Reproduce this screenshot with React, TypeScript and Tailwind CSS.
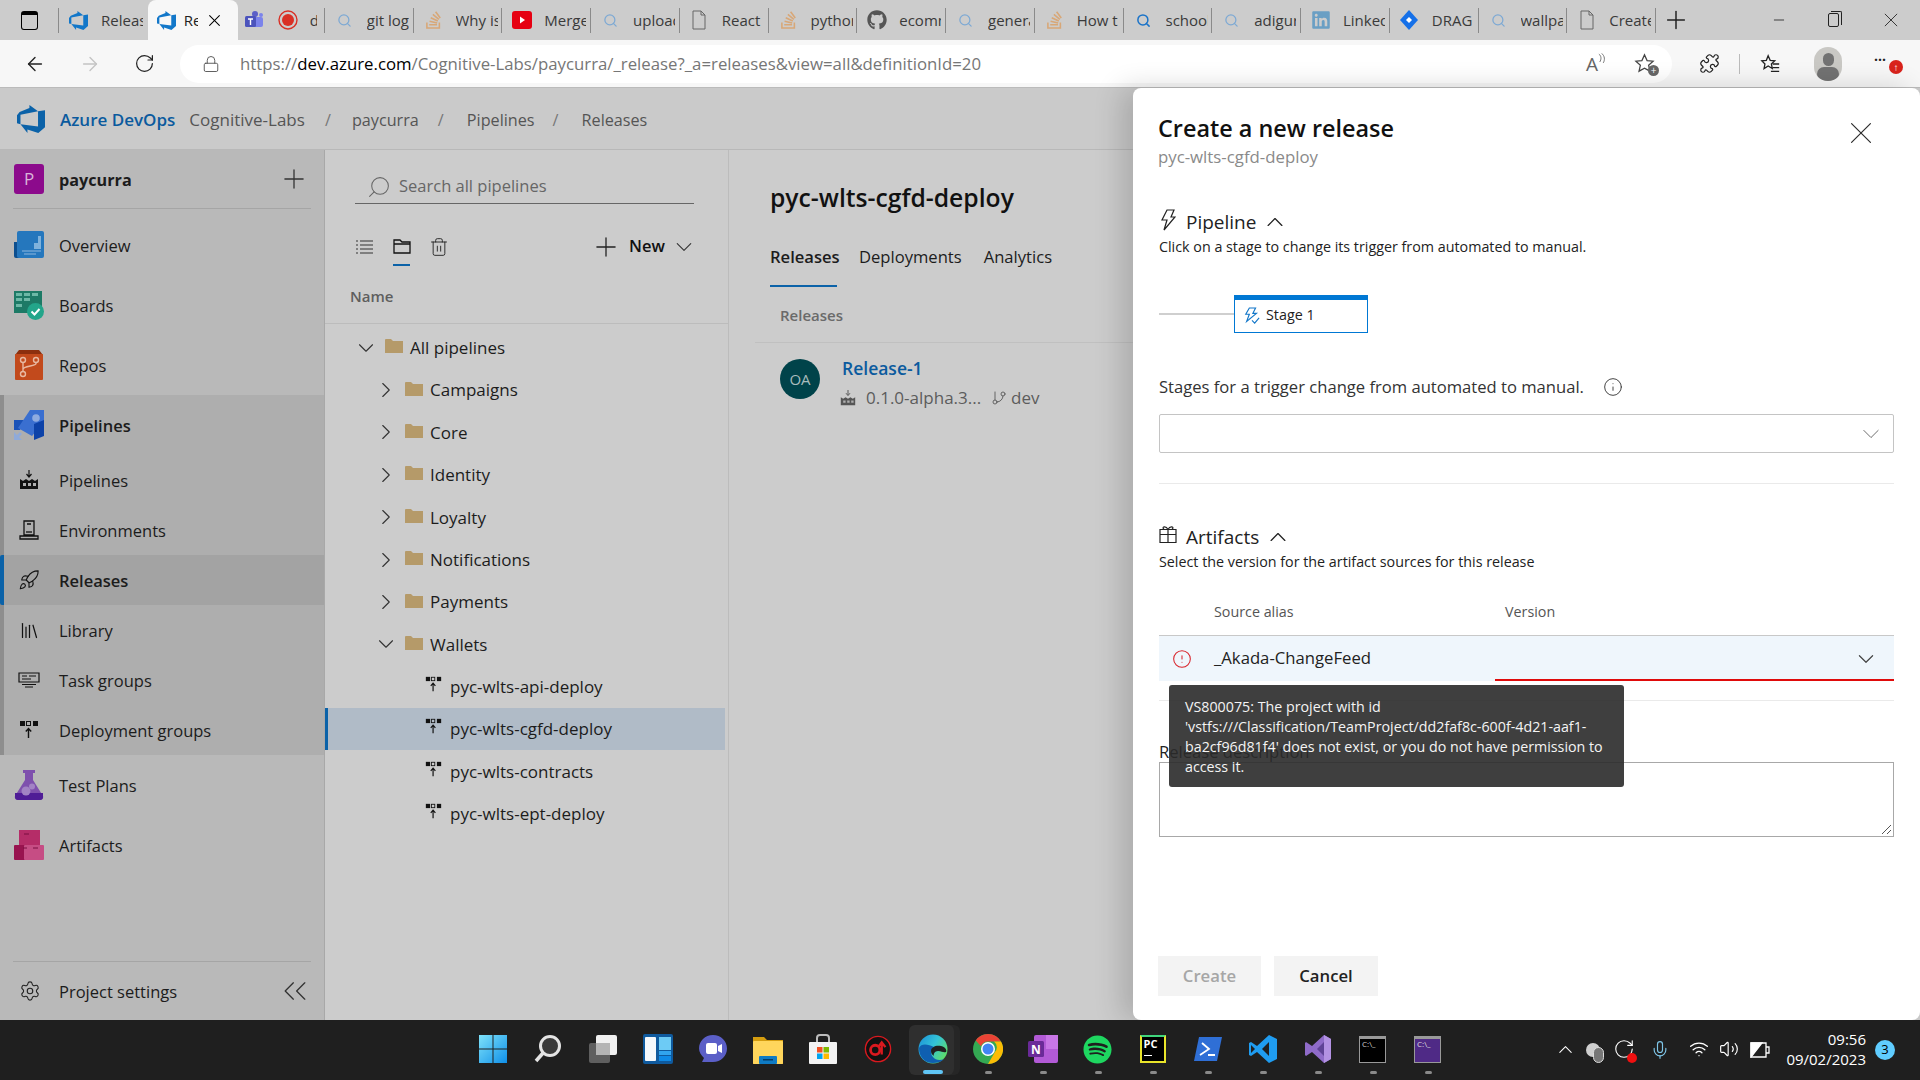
import type { ReactNode } from "react";
import {
  AlertCircle,
  ArrowLeft,
  ArrowRight,
  ChevronDown,
  ChevronRight,
  ChevronUp,
  ChevronsLeft,
  GitBranch,
  Info,
  Library,
  Lock,
  Mic,
  Minus,
  Plus,
  Puzzle,
  RotateCw,
  Rocket,
  Search,
  Settings,
  Trash2,
  Volume2,
  Wifi,
  X,
} from "lucide-react";
import { FaGithub, FaLinkedin, FaSpotify, FaStackOverflow } from "react-icons/fa";

const font = "font-['Open_Sans','Noto_Sans',sans-serif]";

function AzureLogo({ className = "w-[18px] h-[18px]", color = "#1277c9" }: { className?: string; color?: string }) {
  return (
    <svg viewBox="0 0 24 24" className={className} fill={color}>
      <path d="M0 8.877L2.247 5.91l8.405-3.416V.022l7.37 5.393L2.966 8.338v8.225L0 15.707zm24-4.45v14.651l-5.753 4.9-9.303-3.057v3.056l-5.978-7.416 15.057 1.798V5.415z" />
    </svg>
  );
}

function DocIcon() {
  return (
    <svg viewBox="0 0 16 20" className="w-4 h-5" fill="none" stroke="#666" strokeWidth="1">
      <path d="M2 1h8l4 4v14H2z" />
      <path d="M10 1v4h4" />
    </svg>
  );
}

function TeamsIcon() {
  return (
    <svg viewBox="0 0 20 20" className="w-[20px] h-[20px]">
      <circle cx="11" cy="4" r="3" fill="#5b5fc7" />
      <circle cx="17" cy="5" r="2" fill="#7b83eb" />
      <rect x="8" y="7" width="11" height="10" rx="2" fill="#7b83eb" />
      <rect x="1" y="6" width="11" height="11" rx="1.5" fill="#4b53bc" />
      <path d="M4 9h5M6.5 9v6" stroke="#fff" strokeWidth="1.4" />
    </svg>
  );
}

function RecordIcon() {
  return (
    <svg viewBox="0 0 20 20" className="w-[20px] h-[20px]">
      <circle cx="10" cy="10" r="9" fill="none" stroke="#d93025" strokeWidth="1.4" />
      <circle cx="10" cy="10" r="6" fill="#d93025" />
    </svg>
  );
}

function YoutubeIcon() {
  return (
    <svg viewBox="0 0 20 20" className="w-[20px] h-[20px]">
      <rect width="20" height="18" rx="3" fill="#e60012" y="1" />
      <path d="M8 6.500l5 3.500-5 3.500z" fill="#fff" />
    </svg>
  );
}

function JiraIcon() {
  return (
    <svg viewBox="0 0 20 20" className="w-[20px] h-[24px]">
      <path d="M10 0l9 10-9 10-9-10z" fill="#1570e8" />
      <path d="M10 7l3 3-3 3-3-3z" fill="#fff" />
    </svg>
  );
}

function Bolt({ className, color = "#222" }: { className: string; color?: string }) {
  return (
    <svg viewBox="0 0 16 22" className={className} fill="none" stroke={color} strokeWidth="1.2">
      <path d="M7 1h7l-3 7h4L4 21l3-10H2z" />
    </svg>
  );
}

function BoltCheck() {
  return (
    <svg viewBox="0 0 18 20" className="w-[16px] h-[18px] ml-[9px]" fill="none" stroke="#1277c9" strokeWidth="1.3">
      <path d="M6 1h7l-3 6h4L3 16l3-8H2z" />
      <path d="M9 15l3 3 5-6" />
    </svg>
  );
}

function GiftIcon() {
  return (
    <svg viewBox="0 0 18 18" className="w-[18px] h-[19px] -mt-[5px]" fill="none" stroke="#222" strokeWidth="1.2">
      <path d="M1 4h16v13H1zM1 9h16M9 4v13M5 4c-3-3 2-4 4 0 2-4 7-3 4 0" />
    </svg>
  );
}

type TabDef = { icon: ReactNode; text: string; active?: boolean };

const sq = <Search className="w-[15px] h-[15px] text-[#7da9d4]" strokeWidth={2} />;
const so = <FaStackOverflow className="w-[17px] h-[20px] text-[#d8a777]" />;
const az = <AzureLogo className="w-[19px] h-[19px]" />;

const tabs: TabDef[] = [
  { icon: az, text: "Releas" },
  { icon: az, text: "Re", active: true },
  { icon: <span className="flex items-center gap-[14px]"><TeamsIcon /><RecordIcon /></span>, text: "d" },
  { icon: sq, text: "git log" },
  { icon: so, text: "Why is" },
  { icon: <YoutubeIcon />, text: "Merge" },
  { icon: sq, text: "upload" },
  { icon: <DocIcon />, text: "React" },
  { icon: so, text: "python" },
  { icon: <FaGithub className="w-[20px] h-[20px] text-[#555]" />, text: "ecomm" },
  { icon: sq, text: "genera" },
  { icon: so, text: "How t" },
  { icon: <Search className="w-[15px] h-[15px] text-[#1a73c8]" strokeWidth={2.4} />, text: "school" },
  { icon: sq, text: "adigur" },
  { icon: <FaLinkedin className="w-[20px] h-[20px] text-[#6a9fc4]" />, text: "Linked" },
  { icon: <JiraIcon />, text: "DRAG" },
  { icon: sq, text: "wallpa" },
  { icon: <DocIcon />, text: "Create" },
];

function BrowserChrome() {
  return (
    <>
      <div className="h-10 bg-[#cccccc] flex items-center text-[15px] text-[#3a3a3a] shrink-0">
        <div className="w-[59px] h-[25px] flex items-center justify-center border-r border-[#8a8a8a]">
          <div className="w-[17px] h-[19px] rounded-[3px] border-[1.5px] border-black border-t-[4px]" />
        </div>
        {tabs.map((t, i) =>
          t.active ? (
            <div key={i} className="w-[90px] h-10 bg-[#f7f7f7] rounded-t-lg flex items-center relative pl-[9px] text-[#222]">
              {t.icon}
              <span className="ml-[8px] w-[14px] overflow-hidden">{t.text}</span>
              <X className="w-[15px] h-[15px] ml-[9px] text-black scale-[1.3]" strokeWidth={1.3} />
            </div>
          ) : i === 2 ? (
            <div key={i} className="w-[87px] h-[25px] flex items-center pl-[6px] border-r border-[#8a8a8a]">
              {t.icon}
              <span className="ml-[12px] w-[7px] overflow-hidden">{t.text}</span>
            </div>
          ) : (
            <div key={i} className={`w-[88.75px] h-[25px] flex items-center pl-[9px] border-r border-[#8a8a8a] ${i === 0 ? "border-r-0" : ""}`}>
              <span className="w-[21px] flex justify-center shrink-0 mr-[12px]">{t.icon}</span>
              <span className="overflow-hidden whitespace-nowrap w-[42px]">{t.text}</span>
            </div>
          ),
        )}
        <Plus className="w-[24px] h-[24px] ml-[8px] text-[#222] scale-[1.2]" strokeWidth={1.25} />
        <div className="flex-1" />
        <Minus className="w-[16px] h-[16px] mr-[41px] text-[#222]" strokeWidth={1.25} />
        <div className="relative w-[11px] h-[14px] border border-[#222] rounded-[2px] mr-[43px]">
          <span className="absolute -top-[3px] left-[2px] w-[11px] h-[14px] border-t border-r border-[#222] rounded-tr-[2px]" />
        </div>
        <X className="w-[18px] h-[18px] mr-[20px] text-[#222] scale-[1.3]" strokeWidth={0.9} />
      </div>
      <div className="h-12 bg-[#f7f7f7] border-b border-[#bbb] flex items-center shrink-0 text-[#222]">
        <ArrowLeft className="w-[22px] h-[22px] ml-[24px]" strokeWidth={1.5} />
        <ArrowRight className="w-[22px] h-[22px] ml-[33px] text-[#c4c4c4]" strokeWidth={1.5} />
        <RotateCw className="w-[21px] h-[21px] ml-[33px]" strokeWidth={1.4} />
        <div className="w-[1492px] h-[38px] ml-[25px] bg-white rounded-full flex items-center">
          <Lock className="w-[18px] h-[18px] ml-[22px] text-[#555]" strokeWidth={1.25} />
          <span className="ml-[20px] text-[16.8px] text-[#767676] whitespace-nowrap">
            https://<span className="text-black">dev.azure.com</span>/Cognitive-Labs/paycurra/_release?_a=releases&amp;view=all&amp;definitionId=20
          </span>
          <div className="flex-1" />
          <span className="flex items-start mr-[28px] text-[#666]">
            <span className="text-[19px] leading-[22px]">A</span>
            <svg viewBox="0 0 8 12" className="w-[7px] h-[11px]" fill="none" stroke="#666" strokeWidth="1">
              <path d="M1 1c3 2 3 6 1 9M4 0c4 3 4 8 2 11" />
            </svg>
          </span>
          <span className="relative mr-[16px]">
            <svg viewBox="0 0 24 24" className="w-[23px] h-[23px]" fill="none" stroke="#444" strokeWidth="1.3">
              <path d="M12 3l2.7 6 6.3.6-4.7 4.2 1.4 6.2L12 16.8 6.3 20l1.4-6.2L3 9.6 9.3 9z" />
            </svg>
            <span className="absolute right-[-3px] bottom-[-1px] w-[11px] h-[11px] rounded-full bg-[#666] text-white text-[10px] leading-[10px] text-center">+</span>
          </span>
        </div>
        <Puzzle className="w-[21px] h-[21px] ml-[27px]" strokeWidth={1.4} />
        <div className="w-px h-[20px] bg-[#bbb] ml-[19px]" />
        <svg viewBox="0 0 24 24" className="w-[22px] h-[22px] ml-[19px]" fill="none" stroke="#222" strokeWidth="1.4">
          <path d="M10 3l2.2 5 5 .5-3.700 3.400 1 5-4.500-2.700L5.500 17l1-5L3 8.500l5-.5z" />
          <path d="M15 12h7M15 16h7M13 20h9" />
        </svg>
        <div className="w-[28px] h-[34px] ml-[33px] rounded-full bg-[#c9c8c4] overflow-hidden flex flex-col items-center">
          <div className="w-[11px] h-[13px] mt-[6px] rounded-full bg-[#727272]" />
          <div className="w-[22px] h-[14px] mt-[1px] rounded-full bg-[#727272]" />
        </div>
        <div className="relative ml-[32px] text-[14px] font-bold leading-none -mt-[8px]">
          ···
          <span className="absolute left-[15px] top-[7px] w-[14px] h-[14px] rounded-full bg-[#d9231c] text-white text-[10px] leading-[14px] text-center">↑</span>
        </div>
      </div>
    </>
  );
}

function Breadcrumbs() {
  return (
    <div className="h-[62px] flex items-center border-b border-[#b8b8b8] bg-[#cacaca] text-[16.2px] text-[#555] shrink-0">
      <AzureLogo className="ml-[17px] w-[28px] h-[28px]" color="#0b62a8" />
      <div className="flex items-center pt-[3px]">
        <span className="ml-[15px] text-[17px] font-semibold text-[#0a5a9e]">Azure DevOps</span>
        <span className="ml-[14px] text-[17px]">Cognitive-Labs</span>
        <span className="ml-[20px] w-[6px] text-[#777]">/</span>
        <span className="ml-[21px]">paycurra</span>
        <span className="ml-[19px] w-[6px] text-[#777]">/</span>
        <span className="ml-[23px]">Pipelines</span>
        <span className="ml-[18px] w-[6px] text-[#777]">/</span>
        <span className="ml-[23px]">Releases</span>
      </div>
    </div>
  );
}

function OverviewIcon() {
  return (
    <svg viewBox="0 0 30 30" className="w-[30px] h-[30px]">
      <path d="M0 12h7v16H2a2 2 0 0 1-2-2z" fill="#0d4f8f" />
      <rect x="3" y="1" width="27" height="27" rx="2" fill="#2577bd" />
      <path d="M14 19h6v-6h4V6h3v13z" fill="#7fb2dc" />
      <path d="M8 21h19M10 24h12" stroke="#6ba3d3" strokeWidth="1.5" />
    </svg>
  );
}

function BoardsIcon() {
  return (
    <svg viewBox="0 0 30 30" className="w-[30px] h-[30px]">
      <path d="M0 1h28v22H0z" fill="#1d7a66" />
      <path d="M2 3h6v3H2zM10 3h6v3h-6zM18 3h6v3h-6zM2 8h6v3H2zM10 8h6v3h-6zM2 14h6v3H2z" fill="#6cb8a6" />
      <circle cx="21.500" cy="21.500" r="8.500" fill="#23a58a" />
      <path d="M17.500 21.500l3 3 5-5.500" stroke="#fff" strokeWidth="2" fill="none" />
    </svg>
  );
}

function ReposIcon() {
  return (
    <svg viewBox="0 0 30 30" className="w-[30px] h-[30px]">
      <path d="M5 0h20l4 5H1z" fill="#8c2f0e" />
      <rect x="1" y="4" width="28" height="26" rx="1" fill="#c24a1c" />
      <g stroke="#e8b9a2" strokeWidth="1.4" fill="none">
        <circle cx="9" cy="10" r="2.500" />
        <circle cx="22" cy="10" r="2.500" />
        <circle cx="9" cy="24" r="2.500" />
        <path d="M9 12.500v9M22 12.500v1c0 3-13 2-13 6" />
      </g>
    </svg>
  );
}

function PipelinesIcon() {
  return (
    <svg viewBox="0 0 30 30" className="w-[30px] h-[30px]">
      <path d="M0 10h10l-4 10H0z" fill="#1b53b8" />
      <path d="M30 0v12L18 26 4 18 16 0z" fill="#3a6fd0" />
      <path d="M20 14v16l10-4V10z" fill="#0d42a8" />
      <circle cx="22" cy="8" r="3.800" fill="#8fabdf" />
      <path d="M0 30v-8l3 3 3-3 2 2-3 3 3 3z" fill="#8faad9" />
    </svg>
  );
}

function FlaskIcon() {
  return (
    <svg viewBox="0 0 30 30" className="w-[30px] h-[30px]">
      <path d="M9 0h12v3h-2v7l10 16a3 3 0 0 1-3 4H4a3 3 0 0 1-3-4l10-16V3H9z" fill="#7e50ad" />
      <path d="M1 23h28v4a3 3 0 0 1-3 3H4a3 3 0 0 1-3-3z" fill="#4f1d96" />
      <circle cx="12" cy="21" r="4.500" fill="#a283c4" />
      <circle cx="18" cy="16.500" r="3" fill="#a283c4" />
    </svg>
  );
}

function ArtifactsIcon() {
  return (
    <svg viewBox="0 0 30 30" className="w-[30px] h-[30px]">
      <rect x="5" width="21" height="16" fill="#b52d68" />
      <rect y="15" width="15" height="15" rx="1" fill="#98134f" />
      <rect x="10" y="15" width="20" height="15" rx="1" fill="#c64d84" />
      <path d="M10 4h5M9 18h4M19 18h5" stroke="#7a0f40" strokeWidth="1" />
    </svg>
  );
}

function FactoryIcon({ className = "w-[20px] h-[20px]", color = "#111" }: { className?: string; color?: string }) {
  return (
    <svg viewBox="0 0 20 20" className={className} fill={color}>
      <path d="M10 0v6M7.500 4l2.500 3 2.500-3" stroke={color} strokeWidth="1.2" fill="none" />
      <path d="M1 19V9l3 2 3-2 3 2 3-2 3 2 3-2v10z" />
      <path d="M4 13h3v3H4zM9 13h3v3H9zM14 13h3v3h-3z" fill="#aeaeae" />
    </svg>
  );
}

function EnvironmentIcon() {
  return (
    <svg viewBox="0 0 20 20" className="w-[20px] h-[20px]" fill="none" stroke="#111" strokeWidth="1.3">
      <path d="M5 1h10v14H5zM1 19h18v-3H1zM8 4h4" />
      <path d="M7 12h6" />
    </svg>
  );
}

function TaskGroupIcon() {
  return (
    <svg viewBox="0 0 22 16" className="w-[22px] h-[16px]" fill="none" stroke="#111" strokeWidth="1.2">
      <path d="M1 1h20v9H1zM4 4h5M11 4h7M4 7h9M4 12.500h14M7 15h8" />
    </svg>
  );
}

function DeployIcon({ className = "w-[20px] h-[20px]" }: { className?: string }) {
  return (
    <svg viewBox="0 0 20 20" className={className} fill="#111">
      <rect x="1" y="1" width="5" height="5" />
      <rect x="7.500" y="1.500" width="4" height="4" fill="none" stroke="#111" />
      <rect x="14" y="1" width="5" height="5" />
      <path d="M9.500 18v-9M6.800 11.500l2.700-3 2.700 3" fill="none" stroke="#111" strokeWidth="1.4" />
    </svg>
  );
}

type NavItem = { label: string; icon: ReactNode; selected?: boolean };

const subNav: NavItem[] = [
  { label: "Pipelines", icon: <FactoryIcon /> },
  { label: "Environments", icon: <EnvironmentIcon /> },
  { label: "Releases", icon: <Rocket className="w-[22px] h-[22px] text-[#111]" strokeWidth={1.2} />, selected: true },
  { label: "Library", icon: <Library className="w-[21px] h-[21px] text-[#111]" strokeWidth={1.4} /> },
  { label: "Task groups", icon: <TaskGroupIcon /> },
  { label: "Deployment groups", icon: <DeployIcon /> },
];

function TopNav({ icon, label, bold }: { icon: ReactNode; label: string; bold?: boolean }) {
  return (
    <div className="h-[60px] flex items-center pl-[14px]">
      {icon}
      <span className={`ml-[15px] pt-[3px] ${bold ? "font-semibold" : ""}`}>{label}</span>
    </div>
  );
}

function Sidebar() {
  return (
    <div className="w-[325px] bg-[#b9b9b9] border-r border-[#a8a8a8] flex flex-col text-[16.5px] text-[#1c1c1c] shrink-0">
      <div className="h-[59px] mx-[13px] border-b border-[#a5a5a5] flex items-center shrink-0">
        <div className="w-[30px] h-[30px] ml-px rounded-[3px] bg-[#8c0a8c] text-[#d9b3d9] text-[17px] flex items-center justify-center">P</div>
        <span className="ml-[15px] pt-[3px] font-bold text-[16.2px]">paycurra</span>
        <div className="flex-1" />
        <Plus className="w-[24px] h-[24px] mr-[5px] text-[#333] scale-[1.3]" strokeWidth={1} />
      </div>
      <div className="h-[6px] shrink-0" />
      <TopNav icon={<OverviewIcon />} label="Overview" />
      <TopNav icon={<BoardsIcon />} label="Boards" />
      <TopNav icon={<ReposIcon />} label="Repos" />
      <div className="bg-[#aeaeae] border-l-4 border-[#8e8e8e]">
        <div className="-ml-1"><TopNav icon={<PipelinesIcon />} label="Pipelines" bold /></div>
        {subNav.map((n) => (
          <div key={n.label} className={`h-[50px] flex items-center -ml-1 border-l-4 ${n.selected ? "bg-[#a3a3a3] border-[#0b62a8] font-semibold rounded-l-[2px]" : "border-transparent"}`}>
            <span className="w-[30px] ml-[14px] -translate-x-1 flex justify-center">{n.icon}</span>
            <span className="ml-[11px] pt-[2px]">{n.label}</span>
          </div>
        ))}
      </div>
      <TopNav icon={<FlaskIcon />} label="Test Plans" />
      <TopNav icon={<ArtifactsIcon />} label="Artifacts" />
      <div className="flex-1" />
      <div className="h-[59px] mx-[13px] border-t border-[#a5a5a5] flex items-center shrink-0">
        <Settings className="w-[22px] h-[22px] ml-[6px] text-[#222]" strokeWidth={1.2} />
        <span className="ml-[18px] pt-[2px]">Project settings</span>
        <div className="flex-1" />
        <ChevronsLeft className="w-[28px] h-[28px] mr-[2px] text-[#333] scale-[1.4]" strokeWidth={0.8} />
      </div>
    </div>
  );
}

function Folder() {
  return (
    <svg viewBox="0 0 18 14" className="w-[18px] h-[14px] shrink-0 -mt-[3px]" fill="#b59a69">
      <path d="M0 1a1 1 0 0 1 1-1h5l2 2h10v12H0z" />
    </svg>
  );
}

const folders = [
  { name: "Campaigns", open: false },
  { name: "Core", open: false },
  { name: "Identity", open: false },
  { name: "Loyalty", open: false },
  { name: "Notifications", open: false },
  { name: "Payments", open: false },
  { name: "Wallets", open: true },
];

const leaves = ["pyc-wlts-api-deploy", "pyc-wlts-cgfd-deploy", "pyc-wlts-contracts", "pyc-wlts-ept-deploy"];

function PipelineTree() {
  return (
    <div className="w-[404px] border-r border-[#bcbcbc] flex flex-col text-[17px] text-[#1c1c1c] shrink-0 bg-[#cccccc]">
      <div className="h-[54px] ml-[30px] mr-[34px] pt-[20px] border-b border-[#666] flex items-center text-[#666] text-[16.500px] shrink-0">
        <Search className="w-[20px] h-[20px] ml-[14px] -scale-x-[1.25] scale-y-[1.25]" strokeWidth={1} />
        <span className="ml-[10px]">Search all pipelines</span>
      </div>
      <div className="h-[62px] pt-[23px] flex items-center shrink-0 relative">
        <svg viewBox="0 0 18 14" className="ml-[30px] w-[18px] h-[14px]" fill="none" stroke="#333" strokeWidth="1.2">
          <path d="M5 1h13M5 5h13M5 9h13M5 13h13M1 1h2M1 5h2M1 9h2M1 13h2" />
        </svg>
        <svg viewBox="0 0 18 15" className="ml-[20px] w-[18px] h-[15px]" fill="none" stroke="#111" strokeWidth="1.3">
          <path d="M1 14V1h6l2 2h8v11zM1 5h16" />
        </svg>
        <span className="absolute bottom-0 left-[68px] w-[17px] h-[2px] bg-[#0b62a8]" />
        <Trash2 className="ml-[18px] w-[20px] h-[20px] text-[#222]" strokeWidth={1.1} />
        <div className="flex-1" />
        <Plus className="w-[24px] h-[24px] text-[#222] scale-[1.3]" strokeWidth={1} />
        <span className="ml-[11px] font-semibold text-[16.500px] text-[#111]">New</span>
        <ChevronDown className="w-[20px] h-[20px] ml-[9px] mr-[34px] text-[#333] scale-[1.35]" strokeWidth={1} />
      </div>
      <div className="h-[58px] pl-[25px] pt-[3px] border-b border-[#bcbcbc] flex items-center text-[15px] font-semibold text-[#5e5e5e] shrink-0">Name</div>
      <div className="h-[2.5px] shrink-0" />
      <div className="h-[42.4px] flex items-center pl-[31px]">
        <ChevronDown className="w-[20px] h-[20px] text-[#333] scale-[1.3]" strokeWidth={1} />
        <span className="w-[9px]" />
        <Folder />
        <span className="ml-[7px]">All pipelines</span>
      </div>
      {folders.map((f) => (
        <div key={f.name} className="h-[42.4px] flex items-center pl-[51px]">
          {f.open ? (
            <ChevronDown className="w-[20px] h-[20px] text-[#333] scale-[1.3]" strokeWidth={1} />
          ) : (
            <ChevronRight className="w-[20px] h-[20px] text-[#333] scale-[1.3]" strokeWidth={1} />
          )}
          <span className="w-[9px]" />
          <Folder />
          <span className="ml-[7px]">{f.name}</span>
        </div>
      ))}
      {leaves.map((l) => (
        <div key={l} className={`h-[42.4px] w-[400px] flex items-center pl-[97px] border-l-[3px] ${l === "pyc-wlts-cgfd-deploy" ? "bg-[#b0bbc7] border-[#0b62a8]" : "border-transparent"}`}>
          <DeployIcon className="w-[17px] h-[17px] -mt-[5px]" />
          <span className="ml-[8px]">{l}</span>
        </div>
      ))}
    </div>
  );
}

function ReleasesMain() {
  return (
    <div className="flex-1 bg-[#cccccc] flex flex-col text-[#1c1c1c]">
      <div className="pl-[41px] mt-[29px] text-[24.700px] leading-[38px] font-semibold text-[#111]">pyc-wlts-cgfd-deploy</div>
      <div className="pl-[41px] flex items-start mt-[25px] text-[16.600px] h-[46px]">
        <div className="w-[67px] h-[46px] border-b-2 border-[#0b62a8] font-semibold leading-[32px] whitespace-nowrap -mt-px">Releases</div>
        <span className="ml-[22px] leading-[30px]">Deployments</span>
        <span className="ml-[22px] leading-[30px]">Analytics</span>
      </div>
      <div className="h-[55px] mx-[26px] flex items-center border-b border-[#c0c0c0]">
        <span className="ml-[25px] text-[15px] font-semibold text-[#6a6a6a]">Releases</span>
        <div className="ml-auto mr-[49px] h-[37px] w-px bg-[#bcbcbc]" />
      </div>
      <div className="flex pl-[51px] mt-[16px]">
        <div className="w-10 h-10 rounded-full bg-[#00434a] text-[#a9bcbd] text-[15px] flex items-center justify-center">OA</div>
        <div className="ml-[20px] -mt-[3px]">
          <div className="text-[17.500px] font-semibold text-[#0a5a9e] leading-[24px] ml-[2px]">Release-1</div>
          <div className="flex items-center text-[#5c5c5c] text-[17px] mt-[6px] leading-[24px]">
            <FactoryIcon className="w-[16px] h-[16px]" color="#555" />
            <span className="ml-[10px] w-[110px] whitespace-nowrap">0.1.0-alpha.3...</span>
            <GitBranch className="w-[16px] h-[16px] ml-[15px]" strokeWidth={1.4} />
            <span className="ml-[4px]">dev</span>
          </div>
        </div>
      </div>
    </div>
  );
}

function SectionHead({ icon, label }: { icon: ReactNode; label: string }) {
  return (
    <div className="h-[28px] flex items-center text-[19px] text-[#222]">
      <span className="w-[18px] flex justify-center">{icon}</span>
      <span className="ml-[9px]">{label}</span>
      <ChevronUp className="w-[22px] h-[22px] ml-[8px] scale-[1.25]" strokeWidth={1.1} />
    </div>
  );
}

function ReleasePanel() {
  return (
    <div className="absolute left-[1133px] top-[88px] w-[787px] h-[932px] bg-white rounded-lg shadow-[-12px_0_28px_rgba(0,0,0,0.16)] px-[26px] flex flex-col text-[#222]">
      <X className="absolute right-[46px] top-[32px] w-[26px] h-[26px] text-[#333] scale-[1.45]" strokeWidth={0.8} />
      <div className="mt-[24px] h-[33px] -ml-px text-[23.400px] leading-[32px] font-semibold text-[#111]">Create a new release</div>
      <div className="h-[24px] -ml-px text-[16.800px] leading-[24px] text-[#8a8a8a]">pyc-wlts-cgfd-deploy</div>

      <div className="mt-[39px]">
        <SectionHead icon={<Bolt className="w-[16px] h-[22px] -mt-[4px]" />} label="Pipeline" />
      </div>
      <div className="h-[22px] text-[14.300px] leading-[22px]">Click on a stage to change its trigger from automated to manual.</div>
      <div className="mt-[37px] h-[38px] flex items-center">
        <div className="w-[75px] h-[2px] bg-[#cfcfcf] -mt-[1px]" />
        <div className="w-[134px] h-[38px] border border-[#0078d4] border-t-[5px] flex items-center text-[14.300px]">
          <BoltCheck />
          <span className="ml-[6px] -mt-[3px]">Stage 1</span>
        </div>
      </div>
      <div className="mt-[42px] h-[24px] flex items-center text-[16.600px] text-[#333]">
        Stages for a trigger change from automated to manual.
        <Info className="w-[20px] h-[20px] ml-[19px]" strokeWidth={1.1} />
      </div>
      <div className="mt-[15px] h-[39px] border border-[#c4c4c4] rounded-[2px] flex items-center justify-end">
        <ChevronDown className="w-[22px] h-[22px] mr-[11px] text-[#666] scale-[1.3]" strokeWidth={0.8} />
      </div>
      <div className="mt-[30px] h-px bg-[#eaeaea]" />

      <div className="mt-[39px]">
        <SectionHead icon={<GiftIcon />} label="Artifacts" />
      </div>
      <div className="h-[22px] text-[14.300px] leading-[22px]">Select the version for the artifact sources for this release</div>
      <div className="mt-[27px] h-[24px] flex items-center text-[14.300px] text-[#555]">
        <span className="ml-[55px] w-[291px]">Source alias</span>
        <span>Version</span>
      </div>
      <div className="mt-[11px] h-[46px] bg-[#eff6fc] border-t border-[#c8c8c8] flex items-center relative text-[16.700px]">
        <AlertCircle className="w-[20px] h-[20px] ml-[13px] text-[#d8232a]" strokeWidth={1.25} />
        <span className="ml-[22px] -mt-[2px]">_Akada-ChangeFeed</span>
        <ChevronDown className="absolute right-[17px] top-[12px] w-[22px] h-[22px] text-[#444] scale-[1.2]" strokeWidth={1.1} />
        <span className="absolute left-[336px] right-0 bottom-0 h-[2px] bg-[#e00b0b]" />
      </div>
      <div className="mt-[19px] h-px bg-[#eaeaea]" />
      <div className="mt-[40px] h-[21px] text-[16.600px] leading-[21px]">Release description</div>
      <div className="h-[75px] border border-[#a8a8a8] relative">
        <svg viewBox="0 0 10 10" className="absolute right-[2px] bottom-[2px] w-[10px] h-[10px]" stroke="#555" strokeWidth="1">
          <path d="M1 10L10 1M6 10l4-4" />
        </svg>
      </div>
      <div className="mt-auto mb-[24px] -ml-px flex gap-[13px] text-[16.700px] font-semibold">
        <div className="w-[103px] h-10 bg-[#f3f3f3] text-[#a6a6a6] flex items-center justify-center">Create</div>
        <div className="w-[104px] h-10 bg-[#f3f3f3] text-[#222] flex items-center justify-center">Cancel</div>
      </div>

      <div className="absolute left-[36px] top-[597px] w-[455px] h-[102px] bg-[#2a2a2a]/90 rounded-[3px] px-[16px] py-[12px] text-[14.250px] leading-[20px] text-[#f4f4f4] whitespace-nowrap">
        <div>VS800075: The project with id</div>
        <div>'vstfs:///Classification/TeamProject/dd2faf8c-600f-4d21-aaf1-</div>
        <div>ba2cf96d81f4' does not exist, or you do not have permission to</div>
        <div>access it.</div>
      </div>
    </div>
  );
}

function Win11Logo() {
  return (
    <svg viewBox="0 0 30 30" className="w-[30px] h-[30px]">
      <defs>
        <linearGradient id="win" x1="0" y1="0" x2="1" y2="1">
          <stop offset="0" stopColor="#7fe3fa" />
          <stop offset="1" stopColor="#0f8fe8" />
        </linearGradient>
      </defs>
      <path d="M1 1h13.500v13.500H1zM15.500 1H29v13.500H15.500zM1 15.500h13.500V29H1zM15.500 15.500H29V29H15.500z" fill="url(#win)" />
    </svg>
  );
}

const taskIcons: { node: ReactNode; dot?: boolean; active?: boolean }[] = [
  { node: <Win11Logo /> },
  {
    node: (
      <svg viewBox="0 0 30 30" className="w-[30px] h-[30px]" fill="none">
        <circle cx="17" cy="12" r="9.500" stroke="#e4e4e4" strokeWidth="3" fill="#3a3a3a" />
        <path d="M10 19l-7 8" stroke="#e4e4e4" strokeWidth="3.500" />
      </svg>
    ),
  },
  {
    node: (
      <svg viewBox="0 0 30 30" className="w-[30px] h-[30px]">
        <rect x="1" y="9" width="21" height="20" rx="2" fill="#5f5f5f" />
        <rect x="8" y="1" width="21" height="20" rx="2" fill="#f0f0f0" />
        <rect x="8" y="9" width="14" height="12" fill="#b4b4b4" />
      </svg>
    ),
  },
  {
    node: (
      <svg viewBox="0 0 30 30" className="w-[30px] h-[30px]">
        <rect width="30" height="30" rx="2" fill="#0f5a9e" />
        <rect x="2" y="3" width="11" height="24" rx="1" fill="#f4f8fc" />
        <rect x="16" y="3" width="12" height="13" fill="#6dcbf5" />
        <rect x="16" y="17" width="12" height="4" fill="#31a4ee" />
        <rect x="16" y="22" width="12" height="5" fill="#0f8ae6" />
      </svg>
    ),
  },
  {
    node: (
      <svg viewBox="0 0 30 30" className="w-[30px] h-[30px]">
        <path d="M15 1c8 0 14 6 14 13.500S23 28 15 28H4l2-4C3 21 1 18 1 14.500 1 7 7 1 15 1z" fill="#5b5fc7" />
        <rect x="8" y="9" width="11" height="11" rx="2" fill="#fff" />
        <path d="M20 12l4-2v9l-4-2z" fill="#fff" />
      </svg>
    ),
  },
  {
    node: (
      <svg viewBox="0 0 30 30" className="w-[30px] h-[30px]">
        <path d="M0 3h11l3 3h16v24H0z" fill="#d59d0f" />
        <rect y="7" width="30" height="23" rx="1" fill="#ffd65c" />
        <rect x="6" y="22" width="18" height="8" rx="1" fill="#0f7bc4" />
        <rect x="10" y="25" width="10" height="1.500" fill="#063c66" />
      </svg>
    ),
  },
  {
    node: (
      <svg viewBox="0 0 30 30" className="w-[30px] h-[30px]">
        <path d="M9 8V4a3 3 0 0 1 3-3h6a3 3 0 0 1 3 3v4" stroke="#bdbdbd" strokeWidth="2" fill="none" />
        <rect x="1" y="8" width="28" height="22" rx="1" fill="#f3f3f3" />
        <rect x="9" y="13" width="5.500" height="5.500" fill="#f25022" />
        <rect x="15.500" y="13" width="5.500" height="5.500" fill="#7fba00" />
        <rect x="9" y="19.500" width="5.500" height="5.500" fill="#00a4ef" />
        <rect x="15.500" y="19.500" width="5.500" height="5.500" fill="#ffb900" />
      </svg>
    ),
  },
  {
    node: (
      <svg viewBox="0 0 30 30" className="w-[28px] h-[28px]" fill="none">
        <circle cx="15" cy="15" r="13.500" stroke="#d9191f" strokeWidth="1.500" fill="#111" />
        <circle cx="12" cy="16" r="5" stroke="#d9191f" strokeWidth="3" />
        <path d="M19 21V10M15 13l4-5 4 5" stroke="#d9191f" strokeWidth="2.500" />
      </svg>
    ),
  },
  {
    active: true,
    node: (
      <svg viewBox="0 0 30 30" className="w-[30px] h-[30px]">
        <defs>
          <linearGradient id="edge" x1="0" y1="0" x2="1" y2="0.600">
            <stop offset="0" stopColor="#1b8fd8" />
            <stop offset="0.55" stopColor="#33c3d8" />
            <stop offset="1" stopColor="#5ddc6c" />
          </linearGradient>
        </defs>
        <circle cx="15" cy="15" r="14.500" fill="url(#edge)" />
        <path d="M1 14c0 9 6 15 14 15 4 0 8-1 11-4-4 2-9 1-11-2-3-3-2-8 1-10C10 10 3 9 1 14z" fill="#0f5fb0" />
        <path d="M13 17c0-4 5-6 10-5 5 1 6 5 5 6-3 1-4-1-8-1-3 0-5 3-4 5-2-1-3-3-3-5z" fill="#202020" />
      </svg>
    ),
  },
  {
    node: (
      <svg viewBox="0 0 30 30" className="w-[30px] h-[30px]">
        <circle cx="15" cy="15" r="15" fill="#34a853" />
        <path d="M15 0a15 15 0 0 1 13 7.500H15a7.500 7.500 0 0 0-7 4.700L2.700 6.500A15 15 0 0 1 15 0z" fill="#ea4335" />
        <path d="M28 7.500A15 15 0 0 1 15 30l6.500-11.200A7.500 7.500 0 0 0 21 7.500z" fill="#fbbc05" />
        <circle cx="15" cy="15" r="7" fill="#fff" />
        <circle cx="15" cy="15" r="5.500" fill="#4285f4" />
      </svg>
    ),
    dot: true,
  },
  {
    node: (
      <svg viewBox="0 0 30 30" className="w-[30px] h-[30px]">
        <rect x="6" y="1" width="24" height="28" rx="2" fill="#b25ad6" />
        <rect x="18" y="1" width="12" height="14" fill="#c876e6" />
        <rect y="7" width="16" height="16" rx="1.500" fill="#6a2a98" />
        <text x="8" y="19.500" textAnchor="middle" fontSize="12" fontWeight="700" fill="#fff" fontFamily="Open Sans">N</text>
      </svg>
    ),
    dot: true,
  },
  { node: <FaSpotify className="w-[29px] h-[29px] text-[#1ed760]" />, dot: true },
  {
    node: (
      <div className="w-[26px] h-[28px] bg-black border-2 border-[#e9e42a] border-t-[#3fd67c] text-white text-[11px] font-bold leading-[14px] pl-[2px]">
        PC
        <div className="w-[8px] h-px bg-white mt-[4px]" />
      </div>
    ),
    dot: true,
  },
  {
    node: (
      <svg viewBox="0 0 30 30" className="w-[30px] h-[30px]">
        <path d="M6 3h23l-5 24H1z" fill="#2f6fd6" />
        <path d="M9 9l7 6-9 6M15 21h7" stroke="#fff" strokeWidth="1.800" fill="none" />
      </svg>
    ),
    dot: true,
  },
  {
    node: (
      <svg viewBox="0 0 30 30" className="w-[30px] h-[30px]">
        <path d="M21 1l8 4v20l-8 4-12-11-6 4-2-1V9l2-1 6 4z" fill="#1f9cf0" />
        <path d="M21 8l-7 7 7 7z" fill="#202020" />
        <path d="M3 11l4 4-4 4z" fill="#202020" />
      </svg>
    ),
    dot: true,
  },
  {
    node: (
      <svg viewBox="0 0 30 30" className="w-[30px] h-[30px]">
        <path d="M21 1l7 4v20l-7 4-12-11-6 4-1-1V9l1-1 6 4z" fill="#8f6bc9" />
        <path d="M21 8l-7 7 7 7z" fill="#5f4396" />
        <path d="M21 1l7 4v20l-7 4z" fill="#b392e3" />
      </svg>
    ),
    dot: true,
  },
  {
    node: (
      <div className="w-[27px] h-[27px] bg-black border border-[#999] border-t-[3px] text-[#ccc] text-[8px] leading-[10px] pl-[2px]">C:\_</div>
    ),
    dot: true,
  },
  {
    node: (
      <div className="w-[27px] h-[27px] bg-[#4f2a86] border border-[#999] border-t-[3px] text-[#ddd] text-[8px] leading-[10px] pl-[2px]">C:\_</div>
    ),
    dot: true,
  },
];

function Taskbar() {
  return (
    <div className="h-[60px] bg-[#1f1f1f] flex items-center text-white shrink-0 relative z-10">
      <div className="ml-[466px] flex h-full">
        {taskIcons.map((t, i) => (
          <div key={i} className="w-[55px] h-full flex items-center justify-center relative">
            {t.active && <div className="absolute left-[10px] top-[5px] w-[44px] h-[50px] rounded-md bg-[#262626]" />}
            {t.active && <div className="absolute left-[3px] top-[5px] w-[45px] h-[50px] rounded-md bg-[#2f2f2f]" />}
            <span className="relative -mt-[2px] -ml-[2px] flex items-center justify-center">{t.node}</span>
            {t.dot && <span className="absolute bottom-[6px] w-[7px] h-[3px] rounded-full bg-[#8a8a8a]" />}
            {t.active && <span className="absolute bottom-[6px] left-[17px] w-[20px] h-[4px] rounded-full bg-[#60c5f5]" />}
          </div>
        ))}
      </div>
      <ChevronUp className="absolute left-[1556px] top-[20px] w-[19px] h-[19px] scale-[1.2]" strokeWidth={1.1} />
      <span className="absolute left-[1586px] top-[23px] w-[14px] h-[14px] rounded-full bg-[#cfcfcf]" />
      <span className="absolute left-[1593px] top-[27px] w-[11px] h-[16px] rounded-full bg-[#777] border border-[#ddd]" />
      <RotateCw className="absolute left-[1613px] top-[18px] w-[22px] h-[22px]" strokeWidth={1.2} />
      <span className="absolute left-[1627px] top-[33px] w-[10px] h-[10px] rounded-full bg-[#f01010]" />
      <Mic className="absolute left-[1650px] top-[19px] w-[20px] h-[22px] text-[#7fc6e8]" strokeWidth={1.4} />
      <Wifi className="absolute left-[1689px] top-[19px] w-[20px] h-[20px]" strokeWidth={1.6} />
      <Volume2 className="absolute left-[1719px] top-[19px] w-[20px] h-[20px]" strokeWidth={1.4} />
      <svg viewBox="0 0 24 16" className="absolute left-[1748px] top-[22px] w-[24px] h-[16px]" fill="none" stroke="#fff" strokeWidth="1.3">
        <path d="M3 1h15v14H3zM18 5h3v6h-3z" />
        <path d="M3 15L14 1H3z" fill="#fff" />
      </svg>
      <div className="absolute right-[54px] top-[9px] text-right text-[15px] leading-[20px] whitespace-nowrap">
        <div>09:56</div>
        <div>09/02/2023</div>
      </div>
      <div className="absolute left-[1875px] top-[20px] w-[20px] h-[20px] rounded-full bg-[#60cdff] text-black text-[13px] flex items-center justify-center">3</div>
    </div>
  );
}

export default function App() {
  return (
    <div className={`w-[1920px] h-[1080px] overflow-hidden flex flex-col relative bg-[#cccccc] ${font}`}>
      <BrowserChrome />
      <Breadcrumbs />
      <div className="flex-1 flex min-h-0">
        <Sidebar />
        <PipelineTree />
        <ReleasesMain />
      </div>
      <ReleasePanel />
      <Taskbar />
    </div>
  );
}
